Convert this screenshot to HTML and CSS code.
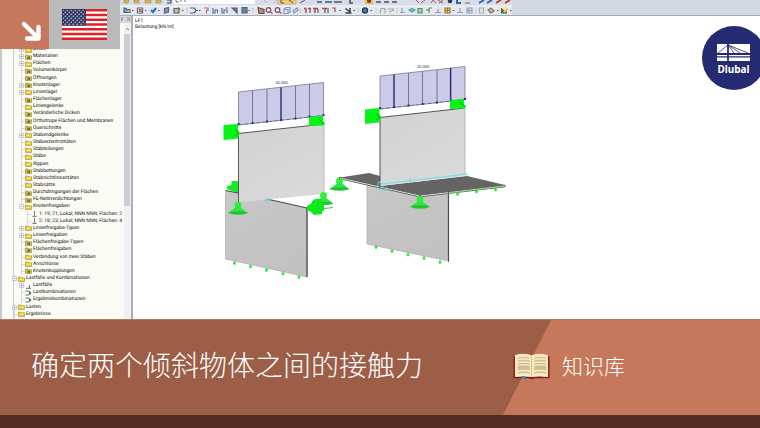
FILE: index.html
```
<!DOCTYPE html>
<html lang="zh-CN">
<head>
<meta charset="utf-8">
<title>确定两个倾斜物体之间的接触力</title>
<meta name="viewport" content="width=device-width, initial-scale=1">
<link rel="stylesheet" href="styles.css">
</head>
<body>
<svg class="defs" aria-hidden="true">
  <symbol id="folder" viewBox="0 0 7 6"><path d="M.5 1h2.3l.7.8h3v3.700h-6z" fill="#ecca35" stroke="#a48b27" stroke-width=".6"/><path d="M1.500 3.200h4" stroke="#fff3a0" stroke-width=".9"/></symbol>
  <symbol id="folder-mark" viewBox="0 0 7 6"><path d="M.5 1h2.300l.7.8h3v3.700h-6z" fill="#dfc030" stroke="#98842a" stroke-width=".6"/><path d="M2.300 2.600h2.700v2.200H2.300z" fill="#4f6f72"/></symbol>
  <symbol id="release" viewBox="0 0 7 6"><path d="M3.500 0v4.500" stroke="#b45b5b"/><path d="M1.500 5.300h4" stroke="#515b83"/></symbol>
  <symbol id="case" viewBox="0 0 7 6"><path d="M1 5.300h5M4.500 2v3" stroke="#4960a8" stroke-width=".9"/></symbol>
  <symbol id="combo" viewBox="0 0 7 6"><path d="M.5 1h3l2 2-2 2h-3" fill="none" stroke="#547268"/><path d="M4 1l2.500 2L4 5z" fill="#287b4d"/></symbol>
</svg>
<main class="page">
  <section class="app" lang="de">
    <header class="toolbar">
      <svg class="tools" viewBox="120 0 640 16" preserveAspectRatio="xMinYMin slice" aria-hidden="true">
        <path d="M120 0h392v6H120z" fill="#d7dde6"/><path d="M120 6h392v10H120z" fill="#e4e8ee"/>
        <path d="M120 6h392" stroke="#f3f5f8"/>
        <path d="M173 0h82v4h-82z" fill="#fff"/>
        <path d="M124 0h5l-1 3h-4zM134 0h5v3h-5zM145 0h6v3h-6zM156 0h5v3h-5z" fill="#d5b94b" stroke="#9b8b4b" stroke-width=".6"/>
        <path d="M167 0h4v3h-4" fill="none" stroke="#303b52"/>
        <path d="M176 0v2h3M181 0v2M185 0v2" fill="none" stroke="#555" stroke-width=".8"/>
        <path d="M264 0l3 3M274 3l3-3" stroke="#a4b3c6"/>
        <path d="M278 0h18v4h-18z" fill="#f4cf73" stroke="#cf9f51" stroke-width=".6"/>
        <path d="M281 0v3h3M289 0l4 3M300 3l5-3" fill="none" stroke="#534a7a"/>
        <path d="M317 2h5M325 2h7M334 2h8M350 0v3h3M376 2h5M384 2h5M392 2h5" stroke="#4d5567" stroke-width="1.600" fill="none"/>
        <path d="M365 0h8v4h-8z" fill="#edbb4d"/><circle cx="369" cy="1" r="2" fill="#8f342e"/>
        <path d="M416 0l3 3M421 3l4-3M431 3l2-3 3 3M438 0l5 3M439 3l4-3M465 3h5" fill="none" stroke="#9d546a"/>
        <circle cx="450" cy="1" r="2.300" fill="#27385b"/><path d="M457 0v3h4M479 3l5-3M487 3l5-3" stroke="#2f67a3" stroke-width="2" fill="none"/><path d="M496 3l5-3M505 3l5-3" stroke="#ba4239" stroke-width="2"/>
        <g fill="none" stroke="#526481" stroke-width="1.200">
          <path d="M124 8v4.500h6v-3h-3l-1-1z" fill="#709dc5"/><path d="M127.500 10h2v2h-2z" fill="#e5c452" stroke="none"/><path d="M137.500 8h5v5h-5z" fill="#fff"/><path d="M139.500 9.500h1.500v2h-1.500z" stroke="#c7544a"/>
          <path d="M151 10l2 2 3-4" stroke="#277bbc" stroke-width="2.200"/><path d="M164.500 8.500l4-1v4.500l-4 1z" fill="#8497b3"/><path d="M174 8.500h5v4.500h-5zM178 7.500l2 2" fill="#c9c877"/>
          <path d="M190 8h4q3.500 2.500 0 5h-4M196 10.500h2"/><path d="M204 8h4v2.500h-1.500v3" stroke="#b56b68"/><path d="M213 8v5h2v-3h2.500v3M222 8v5h2v-3h3v3" stroke="#5575a0"/><path d="M232 8l5 5v-5zM242 7.500h5v5.500h-5z" fill="#6385a3"/><path d="M226 8h2M236 11h2M245 12h3" stroke="#c54b48"/>
          <path d="M258 7.500l6 2v4h-5z" fill="#b98d77" stroke="#6f4d46"/><g stroke="#814c69"><circle cx="268.500" cy="10" r="2.300"/><path d="M270.500 12l2 1.500"/><circle cx="277.500" cy="10" r="2.300"/><path d="M279.500 12l2 1.500"/></g>
          <path d="M284 9.500h4v4h-4zM284 9l2-1.500h4v4.500l-2 1M293 11l4-3 1 2-4 3z" stroke="#8295be"/>
          <path d="M304 8.500h2.500M308 8.500h3M313 8.500h5M322 8.500h5M306 9v4M315 9v4M325 9v4" stroke="#b54552" stroke-width="1.500"/><path d="M310 9v4M318 9v4M328 8v5" stroke="#3a8a75" stroke-width="1.400"/>
          <path d="M332 8h3v4" stroke="#b54552"/><path d="M345.500 8.500l5 4M345.500 13h6M350 8v4" stroke="#344252" stroke-width="1.500"/>
          <circle cx="365" cy="10.500" r="2.600" fill="#397db5" stroke="#26394c"/>
          <path d="M380 13.500l1-5h4v5M388 9h6M389 12l5-2" stroke="#a4a5a7"/>
          <path d="M400 12.500h5M402 8v4" stroke="#90a2c0"/><path d="M409 10l3-1.500 3 1.500-3 2z" fill="#9acb55" stroke="#4ea7a5"/><path d="M418 8.500h4v4.500h-4z" fill="#b4d59c" stroke="#4f8b85"/><path d="M429 13V8h3M426 10h4" stroke="#4c9c6b"/><path d="M435 12.500h6M438 9v3" stroke="#889ab1"/>
          <path d="M445 8h5v5h-5zM445 10.500h5M447.500 8v5" fill="#f1d05e" stroke="#9b7938"/><path d="M457 12.500h6M460 8v4M467 8h5v5h-5zM469 8v5M467 10.500h5" stroke="#959bc5"/>
          <path d="M479.500 8h4v5h-4z" stroke="#aaafb4"/><path d="M488 10l3-2 3 3-3 2z" fill="#e2c84b" stroke="#6b7e7b"/>
        </g>
        <path d="M501 8v5.500h6v-2h-3z" fill="#28784c"/><path d="M502 8l2 2 4-2v2l-4 3z" fill="#efc92d"/><path d="M501 8l3 3" stroke="#bd382c"/>
        <path d="M132 10.500h1.500M145 10.500h1.500M158 10.500h1.500M182 10.500h1.500M199 10.500h1.500M248.500 10.500h1.500M339.500 10.500h1.500M353.500 10.500h1.500M370.500 10.500h1.500M453 10.500h1.500M497 10.500h1.500M510 10.500h1.500" stroke="#4c5362"/>
        <path d="M187 8v5M253 8v5M300 8v5M358 8v5M376 8v5M397 8v5M476 8v5" stroke="#b4bac4" stroke-width=".7"/>
      </svg>
    </header>
    <aside class="navigator">
      <div class="navigator-head"><svg class="pin" viewBox="0 0 10 6" aria-hidden="true"><path d="M1 1v4M0 3h2M6 1l3 4M9 1L6 5" stroke="#7a818c" stroke-width=".8"/></svg></div>
      <div class="navigator-body">
        <ul class="tree" id="tree"></ul>
        <div class="scrollbar"><svg class="up" viewBox="0 0 8 11" aria-hidden="true"><path d="M2.500 7L4 5.500 5.500 7" fill="none" stroke="#555"/></svg><span class="thumb"></span></div>
      </div>
    </aside>
    <div class="viewport">
      <p class="caption">LF1<br>Belastung [kN/m]</p>
      <svg class="model" viewBox="133 17 627 302" preserveAspectRatio="xMinYMin meet" role="img" aria-label="Modell">
        <defs>
          <linearGradient id="wall" x2=".6" y2="1"><stop stop-color="#d2d2d2"/><stop offset="1" stop-color="#d9d9d9"/></linearGradient>
          <linearGradient id="base" x2=".6" y2="1"><stop stop-color="#c8c8c8"/><stop offset="1" stop-color="#c1c1c1"/></linearGradient>
          <g id="load">
            <path d="M0 0L85-9.500V23.500L0 33z" fill="#cbcae7" stroke="#77779e" stroke-width=".8"/>
            <path d="M14-1.500V31M28.500-3V29.500M42.500-4.500V28M57-6V26.500M71-8V24.500" stroke="#61618f" stroke-width=".8"/>
            <path d="M0 33L85 23.500" stroke="#5c5c9c" stroke-dasharray="4 2" stroke-width=".7"/>
            <path d="M0 32h.1M14 31h.1M28.500 29.500h.1M42.500 28h.1M57 26.500h.1M71 24.500h.1M85 23h.1" stroke="#26266f" stroke-width="1.800" stroke-linecap="square"/>
          </g>
          <g id="support"><circle r="3.500" cy="3" fill="#2df23a"/><path d="M-2 5h4l8 6q-10 3-20 0z" fill="#31e441"/><path d="M-10 11q10 3 20 0l-4-1.500H-6z" fill="#25bf35"/></g>
          <path id="arrow" d="M0 0v3.500M-1.500 2h3M-1 3h2" stroke="#35e744" stroke-width="1.300"/>
        </defs>
        <g>
          <path d="M225.500 190.500L238 193l29 6 40 9v69l-81.500-18z" fill="url(#base)"/>
          <path d="M226.500 189l1-3 4-1v-4h6.500v12z" fill="#12ee22"/>
          <path d="M225.500 190.500L238 193M267 199l40 9" fill="none" stroke="#4b4b4b" stroke-width="1.200"/>
          <path d="M225.500 190v69l81.500 18" fill="none" stroke="#aaa" stroke-width=".7"/><path d="M307 208v69" stroke="#666" stroke-width="1.700"/>
          <path d="M238.500 133.500L324 124v70l-57 5.500-28.500 3z" fill="url(#wall)"/>
          <path d="M238.500 203v-69.500L324 124" fill="none" stroke="#595959"/><path d="M324 124v70" stroke="#bbb"/>
          <use href="#load" x="238.500" y="92"/>
          <path d="M281 87.500v32" stroke="#2c2c7c" stroke-width="1.200"/>
          <path d="M223.500 125l14.500-1v6l1.500 3-1.500 5.500-14.500 1.500zM309 117l14-1.500v6l2 1-1 3-15 .5z" fill="#07f516"/>
          <path d="M235 130l4 3-4 3M319 119l5 5" stroke="#0aa71a" fill="none"/>
          <use href="#support" x="238" y="202"/><use href="#support" x="323.500" y="192.500"/>
          <path d="M307 206l5-3v-2l3-2h6v3l3 2v7h-2v3l-8 1-3-3-4-2z" fill="#08ec18"/><path d="M324 208.500l9-1M318 199v14" stroke="#32c93d"/>
          <path d="M264 200h7M266 198v4M269 198v4" stroke="#5bd3d9" stroke-width=".8"/>
          <use href="#arrow" x="234.500" y="261"/><use href="#arrow" x="250.500" y="264.500"/><use href="#arrow" x="266.500" y="268"/><use href="#arrow" x="283" y="271.500"/><use href="#arrow" x="299" y="275"/>
          <text class="load-value" x="281.500" y="84">20.000</text>
        </g>
        <g>
          <path d="M367 184l53 11 28.500-3v69L367 244z" fill="url(#base)"/><path d="M367 184v60l81.500 17" fill="none" stroke="#aaa" stroke-width=".7"/><path d="M448.500 192v69" stroke="#4e4e4e" stroke-width="1.200"/>
          <path d="M340 177.500l29-4.500 11 3v10.500z" fill="#666"/>
          <path d="M380 186l87-10 38 9-85 10z" fill="#646464"/>
          <path d="M340 178l40 9 40 9 85-10" fill="none" stroke="#555" stroke-width="2.400"/><path d="M340 178l40 9 40 9 85-10" fill="none" stroke="#dedede"/>
          <path d="M448 193l57-7" stroke="#6cd75e" stroke-width=".8"/>
          <path d="M380 117.500l85-9.500v68l-85 10z" fill="url(#wall)"/>
          <path d="M380 186v-68.500l85-9.500" fill="none" stroke="#555"/><path d="M465 108v67" stroke="#bbb"/>
          <path d="M378 186v-4h3v2l86-10v2M410 178v5M378 190h10" fill="none" stroke="#5ee1e5" stroke-width=".9"/>
          <use href="#load" x="380" y="76"/>
          <path d="M394 74.500V107M450.500 68v32" stroke="#2c2c7c" stroke-width="1.200"/>
          <path d="M365 109.500l14.500-1.500v6l1.500 3-2 5.500-14 1.500zM450 100.500l14-2v6l2 1-1 3-15 .5z" fill="#07f516"/>
          <path d="M376 114l4 3-4 3M460 102l5 5" stroke="#0aa71a" fill="none"/>
          <use href="#support" x="339.500" y="178"/><use href="#support" x="420" y="196"/>
          <path d="M339 178h1M379.500 187h1M419.500 195.500h1M448 192h1M504.500 186h1M448 261h1" stroke="#7e2929" stroke-width="1.300"/>
          <use href="#arrow" x="376" y="245"/><use href="#arrow" x="392" y="249"/><use href="#arrow" x="408" y="252.500"/><use href="#arrow" x="424" y="256"/><use href="#arrow" x="440" y="260"/>
          <use href="#arrow" x="457.500" y="192"/><use href="#arrow" x="476.500" y="189.500"/><use href="#arrow" x="495.500" y="187.500"/>
          <text class="load-value" x="423" y="68">20.000</text>
        </g>
      </svg>
    </div>
  </section>
  <section class="banner">
    <h1 class="title">确定两个倾斜物体之间的接触力</h1>
    <div class="category">
      <svg class="book" viewBox="0 0 38 28" aria-hidden="true">
        <path d="M.5 3h37v22.500H22q-3 2-6 0H.5z" fill="#851d1b"/>
        <path d="M2 2q8-3 17 0 9-3 17 0v22q-9-1-17 0-8-1-17 0z" fill="#f6e8bd"/>
        <path d="M19 2v22" stroke="#dac897"/><path d="M2 23.500q9-1 17 0 8-1 17 0" stroke="#fff4cc" fill="none"/>
        <path d="M5 5q6-1.500 12 0M5 8q6-1.500 12 0M5 11q6-1.500 12 0M5 20q6-1.500 12 0M22 5q6-1.500 12 0M22 8q6-1.500 12 0M22 11q6-1.500 12 0M22 20q6-1.500 12 0" fill="none" stroke="#c9bb92" stroke-width="1.200"/>
        <path d="M5 13q6-1 12 0v4q-6-1-12 0zM22 13q6-1 12 0v4q-6-1-12 0z" fill="#cbbd91"/>
        <path d="M9 23.500h3.500v3.200l-1.700-.7-1.800.7z" fill="#159bd5"/>
      </svg>
      <span>知识库</span>
    </div>
  </section>
  <footer class="footer"></footer>
  <div class="corner">
    <div class="arrow-tile"><svg viewBox="0 0 49 49" aria-hidden="true"><path d="M24 24l13.500 13.500M27 38.500h11.500V27" fill="none" stroke="#fff" stroke-width="4.400" stroke-linecap="round" stroke-linejoin="round"/></svg></div>
    <div class="flag-tile">
      <svg class="flag" viewBox="0 0 45 31" role="img" aria-label="USA">
        <defs><pattern id="stars" width="4" height="4" patternUnits="userSpaceOnUse"><circle cx="1.200" cy="1.200" r=".65" fill="#fff"/><circle cx="3.200" cy="3.200" r=".65" fill="#fff"/></pattern></defs>
        <path d="M0 0h45v31H0z" fill="#fff"/>
        <path d="M0 1.200h45M0 5.970h45M0 10.730h45M0 15.500h45M0 20.270h45M0 25.030h45M0 29.800h45" stroke="#df2029" stroke-width="2.400"/>
        <path d="M0 0h24v16.500H0z" fill="#323864"/><path d="M1 1h22v15H1z" fill="url(#stars)"/>
      </svg>
    </div>
  </div>
  <div class="brand">
    <svg viewBox="0 0 64 64" role="img" aria-label="Dlubal">
      <circle cx="32" cy="32" r="32" fill="#252b70"/>
      <path d="M15 18h33v9H15zM15 29h33v1.300H15zM15 31.500h33v3.500H15z" fill="#fff"/>
      <path d="M26 18v17" stroke="#252b70" stroke-width="1.800"/><path d="M26 19l-10 8M26 19l6 8M26 19l12 8M26 19l20 8" stroke="#252b70" stroke-width=".8"/>
      <text class="brand-name" x="31.500" y="47">Dlubal</text>
    </svg>
  </div>
</main>
<script src="tree.js"></script>
</body>
</html>
```
FILE: styles.css
```
* { box-sizing: border-box; }
body { margin: 0; font-family: "Liberation Sans", "Noto Sans CJK SC", sans-serif; }
.defs { position: absolute; width: 0; height: 0; }
.page { position: relative; min-height: 100vh; display: grid; grid-template-rows: 1fr 96px 13px; overflow: hidden; }
.app { display: grid; grid-template-columns: 133px 1fr; grid-template-rows: 16px 1fr; background: #fff; text-rendering: geometricPrecision; }
.toolbar { grid-column: 1 / -1; padding-left: 120px; background: #d3d8e0; border-bottom: 1px solid #a7abb2; overflow: hidden; }
.tools { display: block; width: 100%; height: 16px; }
.navigator { display: flex; flex-direction: column; background: #fbfbf6; border-left: 2px solid #c6cad0; border-right: 2px solid #a9aeb8; }
.navigator-head { height: 7px; background: #d3d7de; display: flex; justify-content: flex-end; }
.pin { width: 10px; height: 6px; }
.navigator-body { flex: 1; display: flex; }
.tree { flex: 1; min-width: 0; display: flex; flex-direction: column; justify-content: space-between; list-style: none; margin: 0; padding: 23px 0 1px 10px; color: #111; font: 5px/7px Roboto, sans-serif; white-space: nowrap; background: linear-gradient(#ccc, #ccc) 11px 0 / 1px 100% no-repeat; }
.row { display: flex; align-items: center; height: 7px; }
.child { padding-left: 7px; }
.leaf { padding-left: 13px; }
.branch { flex: none; width: 6px; height: 7px; }
.icon { flex: none; width: 7px; height: 6px; margin-right: 1px; }
.scrollbar { flex: none; width: 7px; background: #f0f1f2; }
.up { display: block; width: 7px; height: 11px; }
.thumb { display: block; height: 172px; margin-right: 1px; background: #cdced0; }
.viewport { position: relative; background: #fff; }
.model { display: block; width: 100%; margin-top: 1px; }
.caption { position: absolute; left: 2px; top: 2px; margin: 0; color: #111; font: 5px/6px Roboto, sans-serif; }
.load-value { fill: #22223c; font: 4px "Liberation Sans", sans-serif; text-anchor: middle; }
.banner { display: grid; grid-template-columns: 1fr 247px; align-items: center; padding-left: 31px; color: #fff; border-top: 1px solid #b77660; background: #9d5e47; position: relative; isolation: isolate; font-family: "Noto Sans CJK SC", sans-serif; font-weight: 300; }
.banner::before { content: ""; position: absolute; z-index: -1; top: 0; right: 0; bottom: 0; width: 257px; background: #c5785c; clip-path: polygon(48px 0, 100% 0, 100% 100%, 0 100%); }
.title { margin: 0; padding-bottom: 8px; font-size: 28px; line-height: 40px; font-weight: 300; }
.category { display: flex; align-items: center; gap: 12px; padding-bottom: 2px; font-size: 21px; line-height: 30px; }
.category span { padding-bottom: 4px; }
.book { width: 37px; height: 28px; }
.footer { background: #522c20; }
.corner { position: absolute; top: 0; left: 0; display: flex; height: 49px; }
.arrow-tile { width: 49px; background: #c5785c; }
.arrow-tile svg { display: block; }
.flag-tile { width: 71px; background: #bababa; display: flex; align-items: center; justify-content: center; }
.flag { width: 45px; height: 31px; }
.brand { position: absolute; top: 26px; right: -6px; width: 64px; height: 64px; }
.brand svg { display: block; }
.brand-name { fill: #fff; font: bold 10px "Noto Sans", sans-serif; text-anchor: middle; }
```
FILE: tree.js
```
// Fields: level, icon, expander (+, - or none), label
const rows = [
  [1, "folder", "+", "Linien"],
  [1, "folder-mark", "+", "Materialien"],
  [1, "folder", "+", "Flächen"],
  [1, "folder-mark", "", "Volumenkörper"],
  [1, "folder-mark", "", "Öffnungen"],
  [1, "folder-mark", "+", "Knotenlager"],
  [1, "folder", "+", "Linienlager"],
  [1, "folder-mark", "", "Flächenlager"],
  [1, "folder", "", "Liniengelenke"],
  [1, "folder-mark", "", "Veränderliche Dicken"],
  [1, "folder-mark", "", "Orthotrope Flächen und Membranen"],
  [1, "folder-mark", "", "Querschnitte"],
  [1, "folder", "+", "Stabendgelenke"],
  [1, "folder", "", "Stabexzentrizitäten"],
  [1, "folder", "", "Stabteilungen"],
  [1, "folder", "", "Stäbe"],
  [1, "folder", "", "Rippen"],
  [1, "folder-mark", "", "Stabbettungen"],
  [1, "folder", "", "Stabnichtlinearitäten"],
  [1, "folder", "", "Stabsätze"],
  [1, "folder-mark", "", "Durchdringungen der Flächen"],
  [1, "folder-mark", "", "FE-Netzverdichtungen"],
  [1, "folder", "-", "Knotenfreigaben"],
  [2, "release", "", "1: 19; 21; Lokal; NNN NNN; Flächen: 2"],
  [2, "release", "", "2: 18; 23; Lokal; NNN NNN; Flächen: 4"],
  [1, "folder", "+", "Linienfreigabe-Typen"],
  [1, "folder", "+", "Linienfreigaben"],
  [1, "folder-mark", "", "Flächenfreigabe-Typen"],
  [1, "folder-mark", "", "Flächenfreigaben"],
  [1, "folder", "", "Verbindung von zwei Stäben"],
  [1, "folder", "", "Anschlüsse"],
  [1, "folder-mark", "", "Knotenkopplungen"],
  [0, "folder", "-", "Lastfälle und Kombinationen"],
  [1, "case", "+", "Lastfälle"],
  [1, "combo", "", "Lastkombinationen"],
  [1, "combo", "", "Ergebniskombinationen"],
  [0, "folder", "+", "Lasten"],
  [0, "folder", "", "Ergebnisse"]
];
const levels = ["root", "child", "leaf"];
document.getElementById("tree").innerHTML = rows.map(([level, icon, state, label]) => {
  const box = state
    ? `<path d="M.5 1.500h4v4h-4z" fill="#fff" stroke="#b5b8bf" stroke-width=".7"/><path d="M1.500 3.500h2${state === "+" ? "M2.500 2.500v2" : ""}" stroke="#71839b" stroke-width=".7"/>`
    : "";
  return `<li class="row ${levels[level]}"><svg class="branch" viewBox="0 0 6 7"><path d="M2.500 0v7M2.500 3.500H6" stroke="#c5c5c5" stroke-width=".6"/>${box}</svg><svg class="icon"><use href="#${icon}"/></svg><span>${label}</span></li>`;
}).join("");
```
